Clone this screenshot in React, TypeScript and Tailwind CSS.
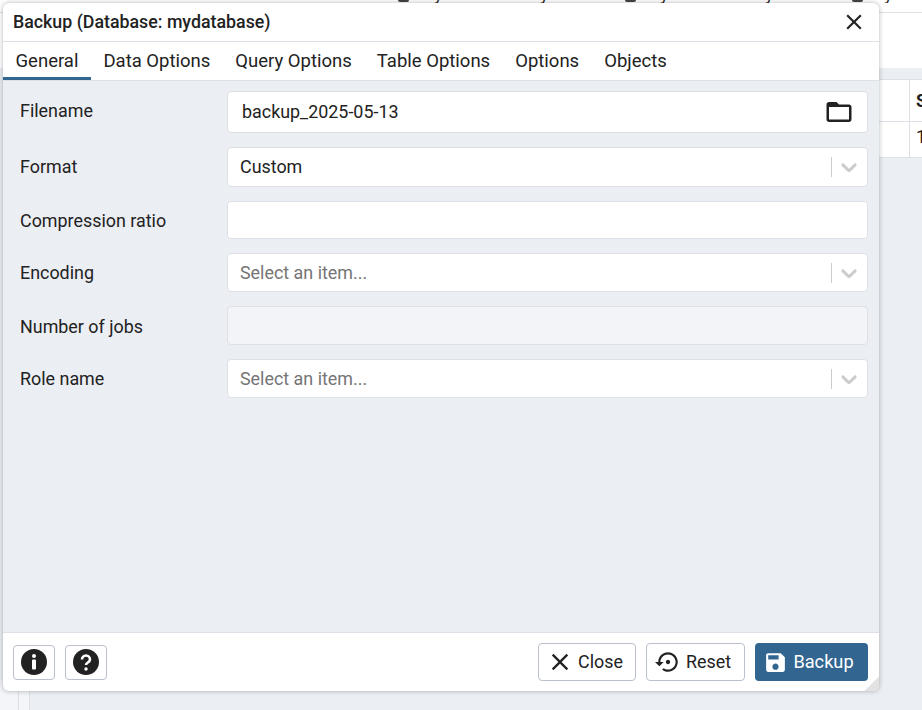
import React from "react";

const tabs = ["General", "Data Options", "Query Options", "Table Options", "Options", "Objects"];

// icon paths (material)
const closePath = "M19 6.41 17.59 5 12 10.59 6.41 5 5 6.41 10.59 12 5 17.59 6.41 19 12 13.41 17.59 19 19 17.59 13.41 12z";
const restorePath =
  "M14 12c0-1.1-.9-2-2-2s-2 .9-2 2 .9 2 2 2 2-.9 2-2zm-2-9c-4.97 0-9 4.03-9 9H0l4 4 4-4H5c0-3.87 3.13-7 7-7s7 3.13 7 7-3.13 7-7 7c-1.51 0-2.91-.49-4.06-1.3l-1.42 1.44C8.04 20.3 9.94 21 12 21c4.97 0 9-4.03 9-9s-4.03-9-9-9z";
const folderPath = "M20 6h-8l-2-2H4c-1.1 0-1.99.9-1.99 2L2 18c0 1.1.9 2 2 2h16c1.1 0 2-.9 2-2V8c0-1.1-.9-2-2-2zm0 12H4V8h16v10z";
const savePath =
  "M17 3H5c-1.11 0-2 .9-2 2v14c0 1.1.89 2 2 2h14c1.1 0 2-.9 2-2V7l-4-4zm-5 16c-1.66 0-3-1.34-3-3s1.34-3 3-3 3 1.34 3 3-1.34 3-3 3zm3-10H5V5h10v4z";

const Icon = ({ d, size, className }: { d: string; size: number; className?: string }) => (
  <svg width={size} height={size} viewBox="0 0 24 24" fill="currentColor" className={className}>
    <path d={d} />
  </svg>
);

const Select = ({ value, placeholder, h }: { value?: string; placeholder?: string; h: string }) => (
  <div className={`flex flex-1 items-center rounded border border-[#dde0e6] bg-white pl-3 ${h}`}>
    <span className={`flex-1 text-[17.9px] ${value ? "text-[#222222]" : "pt-[2px] text-[#757575]"}`}>{value || placeholder}</span>
    <span className="h-5 w-px bg-[#cccccc]" />
    <span className="flex w-[35px] justify-center pr-[2px]">
      <svg width="26" height="26" viewBox="0 0 20 20" fill="#cccccc">
        <path d="M4.516 7.548c0.436-0.446 1.043-0.481 1.576 0l3.908 3.747 3.908-3.747c0.533-0.481 1.141-0.446 1.576 0 0.436 0.445 0.408 1.197 0 1.615-0.406 0.418-4.695 4.502-4.695 4.502-0.217 0.223-0.502 0.335-0.789 0.335s-0.572-0.112-0.789-0.335c0 0-4.287-4.084-4.695-4.502s-0.436-1.17 0-1.615z" />
      </svg>
    </span>
  </div>
);

const Row = ({ label, labelClass, className, children }: { label: string; labelClass?: string; className?: string; children: React.ReactNode }) => (
  <div className={`flex items-center ${className ?? ""}`}>
    <label className={`w-[207px] text-[17.9px] text-[#222222] ${labelClass ?? ""}`}>{label}</label>
    {children}
  </div>
);

// bits of the page's top row that stick out above the dialog
const Y = ({ w }: { w: string }) => <span className={`${w} text-[18px] leading-none text-[#222222]`}>y</span>;
const Bit = ({ w }: { w: string }) => (
  <span className={`${w} flex self-start`}>
    <span className="h-[2px] w-[11px] rounded-b-full bg-[#444444]" />
  </span>
);

export default function App() {
  return (
    <div className="relative h-[710px] w-[922px] overflow-hidden bg-[#ebeef3] font-['Roboto',sans-serif]">
      {/* page behind the dialog */}
      <div className="h-[68px] bg-white">
        <div className="h-[13px] border-b border-[#dde0e6]">
          <div className="flex h-[3px] items-end overflow-hidden pl-[398px]">
            <Bit w="w-[36px]" />
            <Y w="w-[106px]" />
            <Y w="w-[85px]" />
            <Bit w="w-[35px]" />
            <Y w="w-[105px]" />
            <Y w="w-[87px]" />
            <Bit w="w-[32px]" />
            <Y w="w-[20px]" />
          </div>
        </div>
      </div>
      <div className="ml-[860px] mt-[11px] grid h-[79px] grid-cols-[50px_1fr] grid-rows-[42px_1fr] border-y border-[#dde0e6] bg-white text-[17.9px] text-[#222222]">
        <div className="border-b border-r border-[#dde0e6]" />
        <div className="border-b border-[#dde0e6] pl-[6px] pt-2 font-bold">S</div>
        <div className="border-r border-[#dde0e6]" />
        <div className="pl-[6px] pt-0.5">1</div>
      </div>
      <div className="absolute bottom-0 left-0 flex h-[30px]">
        <div className="w-[18px] bg-[#f3f5f8]" />
        <div className="w-[12px] border-x border-[#dde0e6] bg-[#f3f5f8]" />
      </div>

      {/* dialog */}
      <div className="absolute left-[3px] top-[3px] flex h-[688px] w-[876px] flex-col overflow-hidden rounded-md bg-white shadow-[0_0_5px_rgba(0,0,0,0.3)]">
        <div className="box-content flex h-[38px] items-center justify-between border-b border-[#dde0e6] pl-[10px] pr-[12px]">
          <span className="text-[17.8px] font-medium text-[#222222]">Backup (Database: mydatabase)</span>
          <Icon d={closePath} size={26} className="text-[#222222]" />
        </div>
        <div className="flex h-[39px] border-b border-[#dde0e6]">
          {tabs.map((t, i) => (
            <div
              key={t}
              className={`flex items-center px-[12.5px] text-[18.5px] text-[#222222] ${i === 0 ? "border-b-[3px] border-[#326690] pt-[5px]" : "pt-[2px]"}`}
            >
              {t}
            </div>
          ))}
        </div>
        <div className="flex-1 bg-[#ebeef3] pl-[17px] pr-[11px] pt-[10px]">
          <Row label="Filename" labelClass="pb-[2px]" className="mb-[14px]">
            <div className="flex h-[42px] flex-1 items-center rounded border border-[#dde0e6] bg-white pl-[14px] pr-[13px]">
              <span className="flex-1 text-[17.9px] text-[#222222]">backup_2025-05-13</span>
              <Icon d={folderPath} size={30} className="text-[#222222]" />
            </div>
          </Row>
          <Row label="Format" className="mb-[14px]"><Select value="Custom" h="h-[40px]" /></Row>
          <Row label="Compression ratio" labelClass="pt-[2px]" className="mb-[14px]">
            <div className="h-[38px] flex-1 rounded border border-[#dde0e6] bg-white" />
          </Row>
          <Row label="Encoding" labelClass="pt-[2px]" className="mb-[14px]"><Select placeholder="Select an item..." h="h-[39px]" /></Row>
          <Row label="Number of jobs" labelClass="pt-[4px]" className="mb-[14px]">
            <div className="h-[39px] flex-1 rounded border border-[#dde0e6] bg-[#f3f4f8]" />
          </Row>
          <Row label="Role name" labelClass="pt-[2px]"><Select placeholder="Select an item..." h="h-[39px]" /></Row>
        </div>
        <div className="relative flex h-[59px] items-center justify-between border-t border-[#dde0e6] pl-[10px] pr-[11px]">
          <div className="flex gap-[10px]">
            <button className="flex h-[35px] w-[42px] items-center justify-center rounded border border-[#bac1cd]">
              <svg width="26" height="26" viewBox="0 0 26 26">
                <circle cx="13" cy="13" r="13" fill="#222222" />
                <rect x="11" y="10.5" width="4" height="10" rx="1" fill="white" />
                <circle cx="13" cy="7" r="2" fill="white" />
              </svg>
            </button>
            <button className="flex h-[35px] w-[42px] items-center justify-center rounded border border-[#bac1cd]">
              <svg width="26" height="26" viewBox="0 0 26 26">
                <circle cx="13" cy="13" r="13" fill="#222222" />
                <path d="M9 10.5a4 4 0 0 1 8 0c0 3-4 3-4 5.5" fill="none" stroke="white" strokeWidth="2.6" />
                <circle cx="13" cy="20" r="1.7" fill="white" />
              </svg>
            </button>
          </div>
          <div className="flex gap-[10px]">
            <button className="flex h-[38px] w-[98px] items-center justify-center gap-[4px] rounded border border-[#bac1cd] pr-[3px] text-[17.9px] text-[#222222]">
              <Icon d={closePath} size={28} className="-ml-[2px]" />Close
            </button>
            <button className="flex h-[38px] w-[99px] items-center justify-center gap-[5px] rounded border border-[#bac1cd] pr-[5px] text-[17.9px] text-[#222222]">
              <Icon d={restorePath} size={26} />Reset
            </button>
            <button className="flex h-[38px] w-[113px] items-center justify-center gap-[5px] rounded bg-[#326690] pr-[6px] text-[18.2px] text-white">
              <Icon d={savePath} size={25} />Backup
            </button>
          </div>
          <div className="absolute bottom-0 right-0 h-[14px] w-[14px] bg-[linear-gradient(135deg,transparent_50%,#e2e2e2_50%)]" />
        </div>
      </div>
    </div>
  );
}
